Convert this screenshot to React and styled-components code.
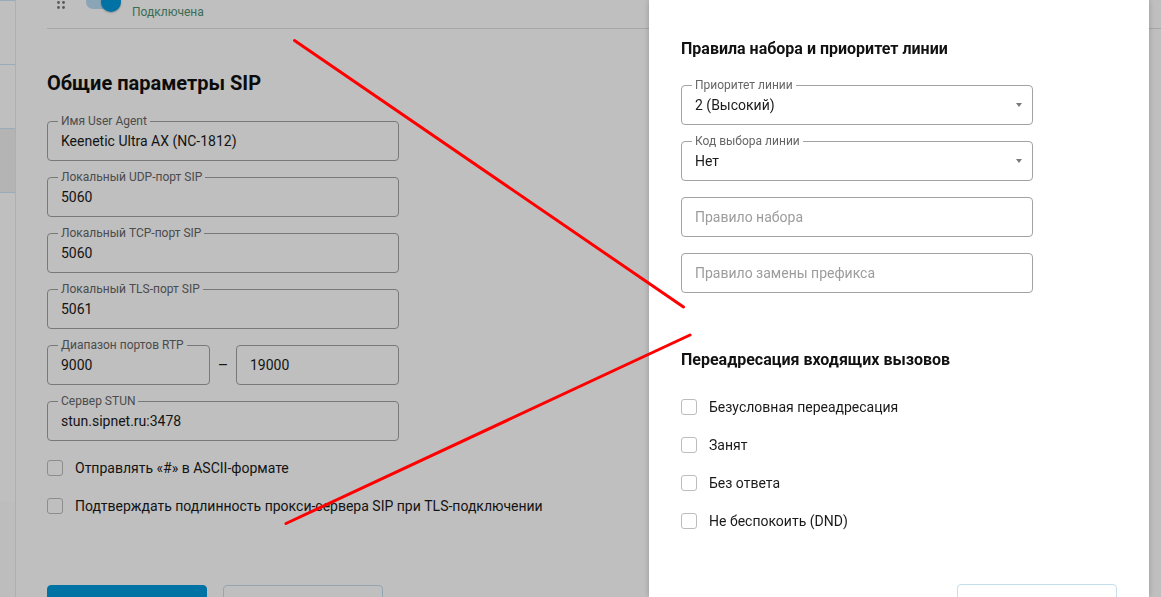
import React from "react";
import styled, { createGlobalStyle } from "styled-components";

const GlobalStyle = createGlobalStyle`
  html, body { margin: 0; padding: 0; overflow: hidden; }
  body { font-family: Roboto, "Noto Sans", "Liberation Sans", sans-serif; color: #1a1a1a; background: #fff; }
  * { box-sizing: border-box; }
`;

const Page = styled.div`
  display: flex;
  width: 100vw;
  height: 100vh;
  overflow: hidden;
  background: #fff;
`;

const Sidebar = styled.nav`
  flex: 0 0 16px;
  display: flex;
  flex-direction: column;
  border-right: 1px solid #eaeaea;
  background: #fff;
`;

const NavItem = styled.div`
  flex: 0 0 64px;
  border-top: 1px solid #cde6f4;
  background: ${(p) => (p.$active ? "#f1f1f1" : "#fff")};
`;

const NavRest = styled.div`
  flex: 0 0 309px;
  border-top: 1px solid #cde6f4;
  background: #fff;
`;

const NavFoot = styled.div`
  flex: 1;
  background: #fcfcfc;
`;

const Main = styled.main`
  flex: 1;
  display: flex;
  flex-direction: column;
  padding-left: 31px;
  & > * { flex-shrink: 0; }
`;

const Header = styled.header`
  display: flex;
  align-items: center;
  height: 53px;
  margin-top: -24px;
  padding-left: 10px;
  border-bottom: 1px solid #dedede;
`;

const DragHandle = styled.svg`
  flex: 0 0 auto;
  margin-right: 21px;
`;

const Switch = styled.span`
  position: relative;
  display: inline-block;
  width: 35px;
  height: 20px;
  flex: 0 0 auto;
  margin-right: 11px;
`;

const SwitchTrack = styled.span`
  position: absolute;
  left: 0;
  top: 3px;
  width: 33px;
  height: 14px;
  border-radius: 7px;
  background: #b9def3;
`;

const SwitchKnob = styled.span`
  position: absolute;
  right: 0;
  top: 0;
  width: 20px;
  height: 20px;
  border-radius: 50%;
  background: #0098da;
  box-shadow: 0 1px 2px rgba(0, 0, 0, 0.25);
`;

const Status = styled.span`
  margin-top: 20px;
  font-size: 12px;
  line-height: 16px;
  color: #4f9270;
`;

const Section = styled.section`
  display: flex;
  flex-direction: column;
`;

const Title = styled.h2`
  margin: 42px 0 26px;
  font-size: 20px;
  line-height: 24px;
  font-weight: 700;
  color: #111;
`;

const Heading = styled.h3`
  margin: ${(p) => (p.$first ? "0" : "57px")} 0 26px;
  font-size: 16px;
  line-height: 20px;
  font-weight: 700;
  color: #111;
`;

const Stack = styled.div`
  display: flex;
  flex-direction: column;
  gap: 16px;
`;

const FieldBox = styled.div`
  position: relative;
  display: flex;
  align-items: center;
  justify-content: space-between;
  width: ${(p) => p.$w || "352px"};
  height: 40px;
  padding: 0 10px 0 13px;
  border: 1px solid #a2a2a2;
  border-radius: 4px;
  background: #fff;
  font-size: 14px;
  line-height: 20px;
  color: ${(p) => (p.$placeholder ? "#9c9c9c" : "#1a1a1a")};
`;

const FloatLabel = styled.span`
  position: absolute;
  top: -8px;
  left: 10px;
  padding: 0 3px;
  background: #fff;
  font-size: 12px;
  line-height: 14px;
  color: #666;
  white-space: nowrap;
`;

const Caret = styled.span`
  width: 0;
  height: 0;
  border-left: 3.5px solid transparent;
  border-right: 3.5px solid transparent;
  border-top: 4px solid #7a7a7a;
`;

const RangeRow = styled.div`
  display: grid;
  grid-template-columns: 163px 26px 163px;
  align-items: center;
  width: 352px;
`;

const Dash = styled.span`
  text-align: center;
  font-size: 16px;
  color: #222;
`;

const CheckList = styled.div`
  display: flex;
  flex-direction: column;
  gap: 16px;
  margin-top: ${(p) => p.$mt || "16px"};
`;

const CheckRow = styled.label`
  display: flex;
  align-items: center;
  gap: 12px;
  height: 22px;
  font-size: 14px;
  line-height: 20px;
  color: #1a1a1a;
  white-space: nowrap;
`;

const CheckBox = styled.span`
  flex: 0 0 16px;
  width: 16px;
  height: 16px;
  border: 1px solid #bdbdbd;
  border-radius: 3px;
  background: #fff;
`;

const ButtonRow = styled.div`
  display: flex;
  gap: 16px;
  justify-content: ${(p) => (p.$end ? "flex-end" : "flex-start")};
  margin-top: ${(p) => p.$mt};
  flex-shrink: 0;
`;

const Button = styled.button`
  width: 160px;
  height: 40px;
  flex: 0 0 auto;
  border-radius: 4px;
  font-family: inherit;
  font-size: 14px;
  font-weight: 500;
  border: 1px solid ${(p) => (p.$primary ? "#0098da" : "#c4deee")};
  background: ${(p) => (p.$primary ? "#0098da" : "#fff")};
  color: ${(p) => (p.$primary ? "#fff" : "#0098da")};
`;

const Backdrop = styled.div`
  position: fixed;
  inset: 0;
  background: rgba(0, 0, 0, 0.25);
`;

const Drawer = styled.aside`
  position: fixed;
  top: 0;
  left: 649px;
  width: 500px;
  height: 100vh;
  padding: 39px 32px 0;
  background: #fff;
  box-shadow: 0 0 6px rgba(0, 0, 0, 0.22);
  display: flex;
  flex-direction: column;
  & > * { flex-shrink: 0; }
`;

const Annotations = styled.svg`
  position: fixed;
  inset: 0;
  width: 100vw;
  height: 100vh;
  pointer-events: none;
`;

function TextField({ label, value, placeholder, select, w }) {
  return (
    <FieldBox $w={w} $placeholder={!value && placeholder}>
      {label && <FloatLabel>{label}</FloatLabel>}
      <span>{value || placeholder}</span>
      {select && <Caret />}
    </FieldBox>
  );
}

function Check({ children }) {
  return (
    <CheckRow>
      <CheckBox />
      {children}
    </CheckRow>
  );
}

export default function App() {
  return (
    <>
      <GlobalStyle />
      <Page>
        <Sidebar>
          <NavItem />
          <NavItem />
          <NavItem $active />
          <NavRest />
          <NavFoot />
        </Sidebar>
        <Main>
          <Header>
            <DragHandle width="8" height="13" viewBox="0 0 8 13">
              {[1.5, 6.5, 11.5].map((y) =>
                [1.5, 6.5].map((x) => (
                  <circle key={`${x}-${y}`} cx={x} cy={y} r="1.4" fill="#777" />
                ))
              )}
            </DragHandle>
            <Switch>
              <SwitchTrack />
              <SwitchKnob />
            </Switch>
            <Status>Подключена</Status>
          </Header>
          <Section>
            <Title>Общие параметры SIP</Title>
            <Stack>
              <TextField label="Имя User Agent" value="Keenetic Ultra AX (NC-1812)" />
              <TextField label="Локальный UDP-порт SIP" value="5060" />
              <TextField label="Локальный TCP-порт SIP" value="5060" />
              <TextField label="Локальный TLS-порт SIP" value="5061" />
              <RangeRow>
                <TextField label="Диапазон портов RTP" value="9000" w="163px" />
                <Dash>–</Dash>
                <TextField value="19000" w="163px" />
              </RangeRow>
              <TextField label="Сервер STUN" value="stun.sipnet.ru:3478" />
            </Stack>
            <CheckList $mt="16px">
              <Check>Отправлять «#» в ASCII-формате</Check>
              <Check>Подтверждать подлинность прокси-сервера SIP при TLS-подключении</Check>
            </CheckList>
            <ButtonRow $mt="68px">
              <Button $primary>Сохранить</Button>
              <Button>Отменить</Button>
            </ButtonRow>
          </Section>
        </Main>
      </Page>
      <Backdrop />
      <Drawer>
        <Heading $first>Правила набора и приоритет линии</Heading>
        <Stack>
          <TextField label="Приоритет линии" value="2 (Высокий)" select />
          <TextField label="Код выбора линии" value="Нет" select />
          <TextField placeholder="Правило набора" />
          <TextField placeholder="Правило замены префикса" />
        </Stack>
        <Heading>Переадресация входящих вызовов</Heading>
        <CheckList $mt="0">
          <Check>Безусловная переадресация</Check>
          <Check>Занят</Check>
          <Check>Без ответа</Check>
          <Check>Не беспокоить (DND)</Check>
        </CheckList>
        <ButtonRow $end $mt="52px">
          <Button>Отмена</Button>
        </ButtonRow>
      </Drawer>
      <Annotations viewBox="0 0 1161 597" preserveAspectRatio="none">
        <line x1="294.5" y1="40.5" x2="683.5" y2="307" stroke="#ff0000" strokeWidth="3" strokeLinecap="round" />
        <line x1="690" y1="335" x2="286" y2="523.5" stroke="#ff0000" strokeWidth="3" strokeLinecap="round" />
      </Annotations>
    </>
  );
}
